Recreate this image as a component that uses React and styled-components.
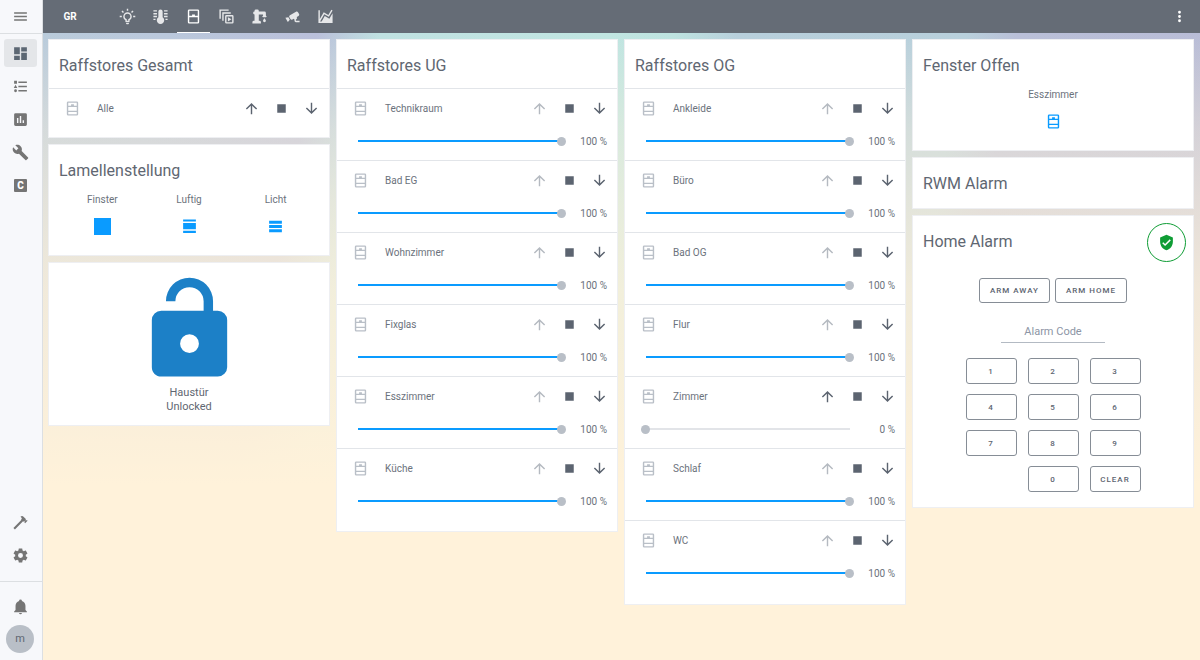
import React, { useState } from "react";
import styled, { createGlobalStyle } from "styled-components";

const GlobalStyle = createGlobalStyle`
  *, *::before, *::after { box-sizing: border-box; }
  body {
    margin: 0;
    font-family: Roboto, "Liberation Sans", sans-serif;
    font-size: 10px;
    color: #5f6772;
    background: #fff2da;
  }
  button, input { font: inherit; color: inherit; }
  h2, p { margin: 0; }
`;

const paths = {
  menu: "M3,6H21V8H3V6M3,11H21V13H3V11M3,16H21V18H3V16Z",
  dashboard: "M13,3V9H21V3M13,21H21V11H13M3,21H11V15H3M3,13H11V3H3V13Z",
  list: "M5,9.5L7.5,14H2.5L5,9.5M3,4H7V8H3V4M5,20A2,2 0 0,0 7,18A2,2 0 0,0 5,16A2,2 0 0,0 3,18A2,2 0 0,0 5,20M9,5V7H21V5H9M9,19H21V17H9V19M9,13H21V11H9V13Z",
  chartBox: "M19,3H5A2,2 0 0,0 3,5V19A2,2 0 0,0 5,21H19A2,2 0 0,0 21,19V5A2,2 0 0,0 19,3M9,17H7V10H9V17M13,17H11V7H13V17M17,17H15V13H17V17Z",
  wrench: "M22.7,19L13.6,9.9C14.5,7.6 14,4.9 12.1,3C10.1,1 7.1,0.6 4.7,1.7L9,6L6,9L1.6,4.7C0.4,7.1 0.9,10.1 2.9,12.1C4.8,14 7.5,14.5 9.8,13.6L18.9,22.7C19.3,23.1 19.9,23.1 20.3,22.7L22.6,20.4C23.1,20 23.1,19.3 22.7,19Z",
  hammer: "M2,19.63L13.43,8.2L12.72,7.5L14.14,6.07L12,3.89C13.2,2.7 15.09,2.7 16.27,3.89L19.87,7.5L18.45,8.91H21.29L22,9.62L18.45,13.21L17.74,12.5V9.62L16.27,11.04L15.56,10.33L4.13,21.76L2,19.63Z",
  cog: "M12,15.5A3.5,3.5 0 0,1 8.5,12A3.5,3.5 0 0,1 12,8.5A3.5,3.5 0 0,1 15.5,12A3.5,3.5 0 0,1 12,15.5M19.43,12.97C19.47,12.65 19.5,12.33 19.5,12C19.5,11.67 19.47,11.34 19.43,11L21.54,9.37C21.73,9.22 21.78,8.95 21.66,8.73L19.66,5.27C19.54,5.05 19.27,4.96 19.05,5.05L16.56,6.05C16.04,5.66 15.5,5.32 14.87,5.07L14.5,2.42C14.46,2.18 14.25,2 14,2H10C9.75,2 9.54,2.18 9.5,2.42L9.13,5.07C8.5,5.32 7.96,5.66 7.44,6.05L4.95,5.05C4.73,4.96 4.46,5.05 4.34,5.27L2.34,8.73C2.21,8.95 2.27,9.22 2.46,9.37L4.57,11C4.53,11.34 4.5,11.67 4.5,12C4.5,12.33 4.53,12.65 4.57,12.97L2.46,14.63C2.27,14.78 2.21,15.05 2.34,15.27L4.34,18.73C4.46,18.95 4.73,19.03 4.95,18.95L7.44,17.94C7.96,18.34 8.5,18.68 9.13,18.93L9.5,21.58C9.54,21.82 9.75,22 10,22H14C14.25,22 14.46,21.82 14.5,21.58L14.87,18.93C15.5,18.67 16.04,18.34 16.56,17.94L19.05,18.95C19.27,19.03 19.54,18.95 19.66,18.73L21.66,15.27C21.78,15.05 21.73,14.78 21.54,14.63L19.43,12.97Z",
  bell: "M21,19V20H3V19L5,17V11C5,7.9 7.03,5.17 10,4.29C10,4.19 10,4.1 10,4A2,2 0 0,1 12,2A2,2 0 0,1 14,4C14,4.1 14,4.19 14,4.29C16.97,5.17 19,7.9 19,11V17L21,19M14,21A2,2 0 0,1 12,23A2,2 0 0,1 10,21",
  dots: "M12,16A2,2 0 0,1 14,18A2,2 0 0,1 12,20A2,2 0 0,1 10,18A2,2 0 0,1 12,16M12,10A2,2 0 0,1 14,12A2,2 0 0,1 12,14A2,2 0 0,1 10,12A2,2 0 0,1 12,10M12,4A2,2 0 0,1 14,6A2,2 0 0,1 12,8A2,2 0 0,1 10,6A2,2 0 0,1 12,4Z",
  up: "M13,20H11V8L5.5,13.5L4.08,12.08L12,4.16L19.92,12.08L18.5,13.5L13,8V20Z",
  down: "M11,4H13V16L18.5,10.5L19.92,11.92L12,19.84L4.08,11.92L5.5,10.5L11,16V4Z",
  stop: "M18,18H6V6H18V18Z",
  shield: "M10,17L6,13L7.41,11.59L10,14.17L16.59,7.58L18,9M12,1L3,5V11C3,16.55 6.84,21.74 12,23C17.16,21.74 21,16.55 21,11V5L12,1Z",
  lockOpen: "M18,8A2,2 0 0,1 20,10V20A2,2 0 0,1 18,22H6C4.89,22 4,21.1 4,20V10A2,2 0 0,1 6,8H15V6A3,3 0 0,0 12,3A3,3 0 0,0 9,6H7A5,5 0 0,1 12,1A5,5 0 0,1 17,6V8H18M12,17A2,2 0 0,0 14,15A2,2 0 0,0 12,13A2,2 0 0,0 10,15A2,2 0 0,0 12,17Z",
  windowClosed: "M6,11H10V9H14V11H18V4H6V11M18,13H6V20H18V13M6,2H18A2,2 0 0,1 20,4V20A2,2 0 0,1 18,22H6A2,2 0 0,1 4,20V4A2,2 0 0,1 6,2Z",
  windowOpen: "M6,8H10V6H14V8H18V4H6V8M18,10H6V15H18V10M6,20H18V17H6V20M6,2H18A2,2 0 0,1 20,4V20A2,2 0 0,1 18,22H6A2,2 0 0,1 4,20V4A2,2 0 0,1 6,2Z",
  bulb: "M20,11H23V13H20V11M1,11H4V13H1V11M13,1V4H11V1H13M4.92,3.5L7.05,5.64L5.63,7.05L3.5,4.93L4.92,3.5M16.95,5.63L19.07,3.5L20.5,4.93L18.37,7.05L16.95,5.63M12,6A6,6 0 0,1 18,12C18,14.22 16.79,16.16 15,17.2V19A1,1 0 0,1 14,20H10A1,1 0 0,1 9,19V17.2C7.21,16.16 6,14.22 6,12A6,6 0 0,1 12,6M14,21V22A1,1 0 0,1 13,23H11A1,1 0 0,1 10,22V21H14M11,18H13V15.87C14.73,15.43 16,13.86 16,12A4,4 0 0,0 12,8A4,4 0 0,0 8,12C8,13.86 9.27,15.43 11,15.87V18Z",
  thermometer: "M9,13V5A3,3 0 0,1 15,5V13A5.2,5.2 0 1,1 9,13M2,3H7V5H2M2,7H7V9H2M2,11H7V13H2M2,15H5V17H2M17,3H22V5H17M17,7H22V9H17M17,11H22V13H17M19,15H22V17H19Z",
  play: "M2,2H15V4H4V15H2M6,6H18V8H8V18H6M12,10H20A2,2 0 0,1 22,12V20A2,2 0 0,1 20,22H12A2,2 0 0,1 10,20V12A2,2 0 0,1 12,10M12,12V20H20V12M14,13V19L19,16",
  pump: "M19,14.5C19,14.5 21,16.67 21,18A2,2 0 0,1 19,20A2,2 0 0,1 17,18C17,16.67 19,14.5 19,14.5M5,18V9A2,2 0 0,1 3,7A2,2 0 0,1 5,5V4A2,2 0 0,1 7,2H9A2,2 0 0,1 11,4V5H19A2,2 0 0,1 21,7V9L21,11A1,1 0 0,1 22,12A1,1 0 0,1 21,13H17A1,1 0 0,1 16,12A1,1 0 0,1 17,11V9H11V18H12A2,2 0 0,1 14,20V22H2V20A2,2 0 0,1 4,18H5Z",
  cctv: "M18.15,4.94C17.77,4.91 17.37,5 17,5.2L8.35,10.2C7.39,10.76 7.07,12 7.62,12.94L9.12,15.53C9.67,16.5 10.89,16.82 11.85,16.27L13.65,15.23C13.92,15.69 14.32,16.06 14.81,16.27V18.04C14.81,19.13 15.7,20 16.81,20H22V18.04H16.81V16.27C17.72,15.87 18.31,14.97 18.31,14C18.31,13.54 18.19,13.11 17.97,12.73L20.5,11.27C21.47,10.71 21.8,9.5 21.24,8.53L19.74,5.94C19.4,5.34 18.79,5 18.15,4.94M6.22,13.17L2,13.87L2.75,15.17L4.75,18.63L5.5,19.93L8.22,16.63L6.22,13.17Z",
  chart: "M17.45,15.18L22,7.31V21H2V3H4V15.54L9.5,6L16,9.78L20.24,2.45L21.97,3.45L16.74,12.5L10.23,8.75L4.31,19H6.57L10.96,11.44L17.45,15.18Z",
  slatsClosed: "M0,0H24V24H0Z",
  slatsAiry: "M3,2H21V5H3M3,7H21V16H3M3,18H21V21H3Z",
  slatsLight: "M3,4H21V8H3M3,10H21V14H3M3,16H21V20H3Z",
};

const Svg = styled.svg`
  display: block;
  flex: none;
  width: ${(p) => p.$size}px;
  height: ${(p) => p.$size}px;
  fill: currentColor;
`;

const Icon = ({ name, size = 17 }) => (
  <Svg viewBox="0 0 24 24" $size={size} aria-hidden="true">
    <path d={paths[name]} fillRule={name === "play" ? "evenodd" : "nonzero"} />
  </Svg>
);

const Shell = styled.div`
  display: flex;
  min-height: 100vh;
`;

const Sidebar = styled.nav`
  flex: none;
  display: flex;
  flex-direction: column;
  width: 43px;
  background: #f7f8fb;
  border-right: 1px solid #dcdfe2;
  color: #757575;
`;

const MenuButton = styled.button`
  display: flex;
  align-items: center;
  height: 34px;
  padding: 0 0 0 12px;
  border: 0;
  border-bottom: 1px solid #dcdfe2;
  background: none;
`;

const SideGroup = styled.div`
  display: flex;
  flex-direction: column;
  gap: 5px;
  padding: ${(p) => p.$padding};
  margin-top: ${(p) => (p.$end ? "auto" : 0)};
  border-top: ${(p) => (p.$line ? "1px solid #dcdfe2" : "0")};
`;

const SideLink = styled.a`
  display: flex;
  align-items: center;
  justify-content: center;
  width: 33px;
  height: 28px;
  border-radius: 3px;
  color: ${(p) => (p.$active ? "#5c6773" : "#757575")};
  background: ${(p) => (p.$active ? "#e4e6e9" : "transparent")};
  text-decoration: none;
`;

const LetterBox = styled.span`
  width: 13px;
  height: 13px;
  border-radius: 1px;
  background: #757575;
  color: #fff;
  font-size: 10px;
  font-weight: 900;
  line-height: 13px;
  text-align: center;
`;

const Avatar = styled.a`
  width: 28px;
  height: 28px;
  margin-left: 2px;
  border-radius: 50%;
  background: #b9bfc7;
  color: #5f6772;
  font-size: 11px;
  line-height: 28px;
  text-align: center;
  text-decoration: none;
`;

const Main = styled.div`
  flex: 1;
  min-width: 0;
  background:
    linear-gradient(to bottom, rgba(255, 242, 218, 0) 33px, rgba(255, 242, 218, 0.4) 130px, rgba(255, 242, 218, 0.6) 200px, rgba(255, 242, 218, 0.8) 290px, #fff2da 485px),
    linear-gradient(100deg, #b9cbdb 0%, #bac8dc 10%, #b9bfda 22%, #bfe1e1 27%, #c0e5e1 45%, #bde3e0 50%, #b7cfdc 55%, #b8d0dc 73%, #b9bfd8 77%, #b8bbd6 100%);
`;

const TopBar = styled.header`
  display: flex;
  align-items: center;
  height: 33px;
  background: #656c76;
  color: #e6e7e9;
`;

const Tab = styled.button`
  display: flex;
  align-items: center;
  justify-content: center;
  width: ${(p) => (p.$wide ? 54 : 33)}px;
  height: 33px;
  padding: 1px 0 0;
  border: 0;
  border-bottom: 1px solid ${(p) => (p.$active ? "#fff" : "transparent")};
  background: none;
  color: ${(p) => (p.$active || p.$wide ? "#fff" : "inherit")};
  font-weight: 700;
`;

const Tabs = styled.div`
  display: flex;
  margin-right: ${(p) => (p.$apart ? 14 : 0)}px;
`;

const MoreButton = styled.button`
  display: flex;
  margin: 0 12px 0 auto;
  padding: 0;
  border: 0;
  background: none;
  color: #fff;
`;

const Board = styled.main`
  display: grid;
  grid-template-columns: repeat(4, minmax(0, 1fr));
  align-items: start;
  gap: 6px;
  padding: 6px 6px 6px 5px;
`;

const Column = styled.div`
  display: flex;
  flex-direction: column;
  gap: 6px;
`;

const Card = styled.section`
  position: relative;
  padding-bottom: ${(p) => p.$bottom}px;
  border: 1px solid #eeeff2;
  background: #fff;
`;

const CardTitle = styled.h2`
  height: 48px;
  padding: 4px 10px 0;
  font-size: 16px;
  font-weight: 400;
  line-height: 44px;
`;

const Cover = styled.div`
  border-top: 1px solid #e2e5e9;
`;

const CoverHead = styled.div`
  display: flex;
  align-items: center;
  height: 38px;
  padding: 0 3px 0 15px;
  color: #b9bfc7;
`;

const CoverName = styled.span`
  flex: 1;
  margin-left: 16px;
  color: #6b727c;
`;

const CoverButton = styled.button`
  display: flex;
  align-items: center;
  justify-content: center;
  width: 30px;
  height: 30px;
  padding: 0;
  border: 0;
  background: none;
  color: #5c6470;
  &:disabled { color: #b5bac1; }
`;

const CoverLevel = styled.div`
  display: flex;
  align-items: center;
  justify-content: space-between;
  height: 33px;
  padding: 0 10px 5px 16px;
  color: #6b727c;
`;

const Range = styled.input`
  appearance: none;
  flex: 1;
  max-width: 213px;
  height: 9px;
  margin: 0;
  background: linear-gradient(to right, #0a9bff ${(p) => p.$level}%, #e2e4e8 ${(p) => p.$level}%) center / calc(100% - 9px) 2px no-repeat;
  &::-webkit-slider-thumb {
    appearance: none;
    width: 9px;
    height: 9px;
    border-radius: 50%;
    background: #b9bfc7;
  }
`;

const Level = styled.output`
  width: 36px;
  text-align: right;
`;

const Glance = styled.div`
  display: flex;
  justify-content: center;
  padding: 0 10px;
`;

const GlanceItem = styled.button`
  display: flex;
  flex-direction: column;
  align-items: center;
  gap: 11px;
  flex: 0 0 calc(100% / 3);
  padding: 0;
  border: 0;
  background: none;
  line-height: 14px;
  color: #6b727c;
  svg { color: #0a9bff; }
`;

const LockButton = styled.button`
  display: flex;
  flex-direction: column;
  align-items: center;
  width: 100%;
  padding: 10px 0 0;
  border: 0;
  background: none;
  font-size: 11px;
  line-height: 14px;
  svg { color: #1c80c7; }
`;

const AlarmBadge = styled.span`
  position: absolute;
  top: 7px;
  right: 7px;
  display: flex;
  align-items: center;
  justify-content: center;
  width: 39px;
  height: 39px;
  border: 1px solid #0f9d35;
  border-radius: 50%;
  color: #0f9d35;
`;

const AlarmForm = styled.form`
  display: flex;
  flex-direction: column;
  align-items: center;
  padding-top: 14px;
`;

const ArmRow = styled.div`
  display: flex;
  gap: 5px;
`;

const OutlineButton = styled.button`
  height: ${(p) => (p.$pad ? 26 : 25)}px;
  padding: 0 ${(p) => (p.$pad ? 0 : 10)}px;
  border: 1px solid #868d96;
  border-radius: 3px;
  background: #fff;
  color: #5c6470;
  font-size: 8px;
  font-weight: 500;
  letter-spacing: 1px;
  text-transform: uppercase;
`;

const CodeInput = styled.input`
  width: 104px;
  height: 22px;
  margin: 18px 0 15px;
  padding: 0;
  border: 0;
  border-bottom: 1px solid #b3bac3;
  background: none;
  font-size: 11px;
  text-align: center;
  &::placeholder { color: #8c95a5; opacity: 1; }
`;

const Keypad = styled.div`
  display: grid;
  grid-template-columns: repeat(3, 51px);
  gap: 10px 11px;
`;

const KeyGap = styled.span``;

function CoverRow({ name, level }) {
  const [value, setValue] = useState(level);
  return (
    <Cover>
      <CoverHead>
        <Icon name="windowOpen" />
        <CoverName>{name}</CoverName>
        <CoverButton type="button" aria-label={`${name} up`} disabled={value === 100}><Icon name="up" /></CoverButton>
        <CoverButton type="button" aria-label={`${name} stop`}><Icon name="stop" /></CoverButton>
        <CoverButton type="button" aria-label={`${name} down`}><Icon name="down" /></CoverButton>
      </CoverHead>
      {level !== undefined && (
        <CoverLevel>
          <Range
            type="range"
            aria-label={name}
            value={value}
            $level={value}
            onChange={(e) => setValue(Number(e.target.value))}
          />
          <Level>{value} %</Level>
        </CoverLevel>
      )}
    </Cover>
  );
}

function CoverCard({ title, rows, bottom }) {
  return (
    <Card $bottom={bottom}>
      <CardTitle>{title}</CardTitle>
      {rows.map(([name, level]) => <CoverRow key={name} name={name} level={level} />)}
    </Card>
  );
}

const ground = [["Technikraum", 100], ["Bad EG", 100], ["Wohnzimmer", 100], ["Fixglas", 100], ["Esszimmer", 100], ["Küche", 100]];
const upper = [["Ankleide", 100], ["Büro", 100], ["Bad OG", 100], ["Flur", 100], ["Zimmer", 0], ["Schlaf", 100], ["WC", 100]];
const slats = [["Finster", "slatsClosed"], ["Luftig", "slatsAiry"], ["Licht", "slatsLight"]];
const views = [["Licht", "bulb"], ["Heizung", "thermometer"], ["Raffstores", "windowClosed"], ["Medien", "play"], ["Pumpe", "pump"], ["Kameras", "cctv"], ["Verlauf", "chart"]];
const sideLinks = [["Overview", "dashboard"], ["Logbook", "list"], ["History", "chartBox"], ["Tools", "wrench"]];

export default function App() {
  return (
    <>
      <GlobalStyle />
      <Shell>
        <Sidebar>
          <MenuButton type="button" aria-label="Menu"><Icon name="menu" /></MenuButton>
          <SideGroup $padding="5px 4px">
            {sideLinks.map(([label, icon]) => (
              <SideLink key={label} href="#" aria-label={label} $active={icon === "dashboard"}><Icon name={icon} /></SideLink>
            ))}
            <SideLink href="#"><LetterBox>C</LetterBox></SideLink>
          </SideGroup>
          <SideGroup $end $padding="0 4px 12px">
            <SideLink href="#" aria-label="Developer tools"><Icon name="hammer" /></SideLink>
            <SideLink href="#" aria-label="Settings"><Icon name="cog" /></SideLink>
          </SideGroup>
          <SideGroup $line $padding="10px 4px 7px">
            <SideLink href="#" aria-label="Notifications"><Icon name="bell" /></SideLink>
            <Avatar href="#">m</Avatar>
          </SideGroup>
        </Sidebar>
        <Main>
          <TopBar>
            <Tabs $apart><Tab type="button" $wide>GR</Tab></Tabs>
            <Tabs>
              {views.map(([label, icon]) => (
                <Tab key={icon} type="button" aria-label={label} $active={icon === "windowClosed"}><Icon name={icon} /></Tab>
              ))}
            </Tabs>
            <MoreButton type="button" aria-label="More"><Icon name="dots" /></MoreButton>
          </TopBar>
          <Board>
            <Column>
              <CoverCard title="Raffstores Gesamt" rows={[["Alle"]]} bottom={10} />
              <Card $bottom={20}>
                <CardTitle>Lamellenstellung</CardTitle>
                <Glance>
                  {slats.map(([label, icon]) => (
                    <GlanceItem key={label} type="button">{label}<Icon name={icon} /></GlanceItem>
                  ))}
                </Glance>
              </Card>
              <Card $bottom={11}>
                <LockButton type="button">
                  <Icon name="lockOpen" size={113} />
                  <span>Haustür</span>
                  <span>Unlocked</span>
                </LockButton>
              </Card>
            </Column>
            <Column><CoverCard title="Raffstores UG" rows={ground} bottom={11} /></Column>
            <Column><CoverCard title="Raffstores OG" rows={upper} bottom={12} /></Column>
            <Column>
              <Card $bottom={20}>
                <CardTitle>Fenster Offen</CardTitle>
                <Glance>
                  <GlanceItem type="button">Esszimmer<Icon name="windowOpen" /></GlanceItem>
                </Glance>
              </Card>
              <Card $bottom={2}><CardTitle>RWM Alarm</CardTitle></Card>
              <Card $bottom={15}>
                <CardTitle>Home Alarm</CardTitle>
                <AlarmBadge><Icon name="shield" /></AlarmBadge>
                <AlarmForm>
                  <ArmRow>
                    <OutlineButton type="button">Arm away</OutlineButton>
                    <OutlineButton type="button">Arm home</OutlineButton>
                  </ArmRow>
                  <CodeInput type="text" aria-label="Alarm Code" placeholder="Alarm Code" />
                  <Keypad>
                    {["1", "2", "3", "4", "5", "6", "7", "8", "9"].map((key) => (
                      <OutlineButton key={key} type="button" $pad>{key}</OutlineButton>
                    ))}
                    <KeyGap />
                    <OutlineButton type="button" $pad>0</OutlineButton>
                    <OutlineButton type="button" $pad>Clear</OutlineButton>
                  </Keypad>
                </AlarmForm>
              </Card>
            </Column>
          </Board>
        </Main>
      </Shell>
    </>
  );
}
